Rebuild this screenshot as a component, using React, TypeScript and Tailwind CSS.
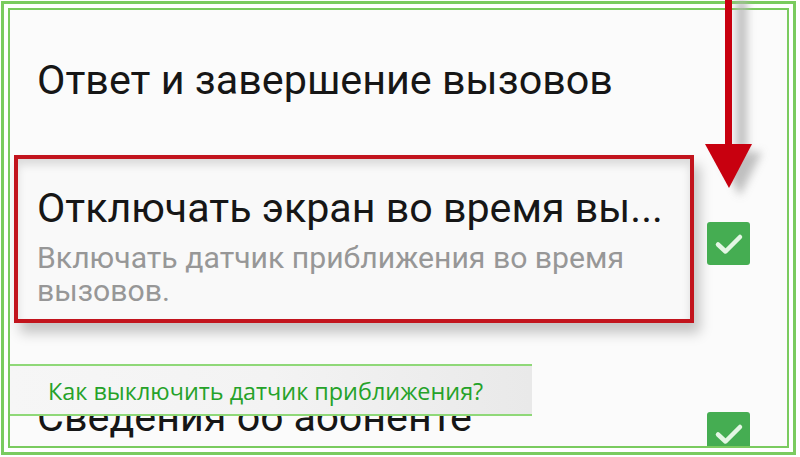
import React from "react"

// Green tick box used by the Android preference rows
function CheckBox({ className = "" }: { className?: string }) {
  return (
    <div className={`flex h-[43px] w-[43px] shrink-0 items-center justify-center rounded-[3px] bg-[#45ad52] ${className}`}>
      <svg width="32" height="32" viewBox="0 0 32 32">
        <path d="M5 16.5 L12.5 23.5 L27 9" fill="none" stroke="#e4f6e4" strokeWidth="4.5" strokeLinecap="round" strokeLinejoin="round" />
      </svg>
    </div>
  )
}

// Red pointer arrow with its soft grey shadow
function Arrow() {
  return (
    <svg className="absolute left-[700px] top-0" width="70" height="210" viewBox="0 0 70 210">
      <defs>
        <filter id="soft" x="-50%" y="-20%" width="200%" height="140%">
          <feGaussianBlur stdDeviation="4" />
        </filter>
      </defs>
      <g filter="url(#soft)" fill="#b5b5b5" opacity="0.85">
        <rect x="36" y="0" width="11" height="150" />
        <polygon points="16,152 62,152 40,196" />
      </g>
      <rect x="25" y="0" width="7" height="150" fill="#c8000f" />
      <polygon points="5,144 52,144 29,188" fill="#c8000f" />
    </svg>
  )
}

export default function App() {
  const android = { fontFamily: "Roboto, 'Noto Sans', sans-serif" }

  return (
    <div className="relative h-[457px] w-[800px] overflow-hidden bg-white">
      <div className="ml-[1px] mt-[1px] h-[454px] w-[795px] border-[3px] border-[#7acb5f] p-[4px]">
        <div className="h-full w-full overflow-hidden border-2 border-[#7acb5f] bg-[#fbfbfb]" style={android}>
          {/* first row */}
          <div className="flex h-[140px] items-center pl-[27px] text-[41.3px] leading-[48px] text-[#161616]">
            Ответ и завершение вызовов
          </div>

          {/* highlighted row */}
          <div className="mt-[5px] flex items-start pl-[4px]">
            <div className="h-[168px] w-[680px] shrink-0 border-4 border-[#c2141d] bg-[#f9f9f9] px-[19px] pt-[25px] shadow-[inset_0_6px_8px_rgba(0,0,0,0.12),6px_10px_12px_rgba(0,0,0,0.22)]">
              <div className="whitespace-nowrap text-[41.2px] leading-[48px] text-[#161616]">Отключать экран во время вы...</div>
              <div className="mt-[9px] text-[30.2px] leading-[33px] text-[#979797]">
                Включать датчик приближения во время
                <br />
                вызовов.
              </div>
            </div>
            <CheckBox className="ml-[13px] mt-[67px]" />
          </div>

          {/* third row, partly hidden */}
          <div className="mt-[69px] flex items-start pl-[27px]">
            <div className="w-[670px] whitespace-nowrap text-[41.3px] leading-[50px] text-[#161616]">Сведения об абоненте</div>
            <CheckBox className="mt-[20px]" />
          </div>
        </div>
      </div>

      <Arrow />

      {/* caption bar */}
      <div className="absolute left-[10px] top-[364px] flex h-[52px] w-[522px] items-center border-y-2 border-[#8fd878] bg-gradient-to-r from-[#f6f6f6] via-[#f3f3f3] to-[#e9e9e9] pl-[38px] pt-[3px]">
        <span className="text-[23.4px] text-[#25a229]" style={{ fontFamily: "'Open Sans', sans-serif" }}>
          Как выключить датчик приближения?
        </span>
      </div>
    </div>
  )
}
